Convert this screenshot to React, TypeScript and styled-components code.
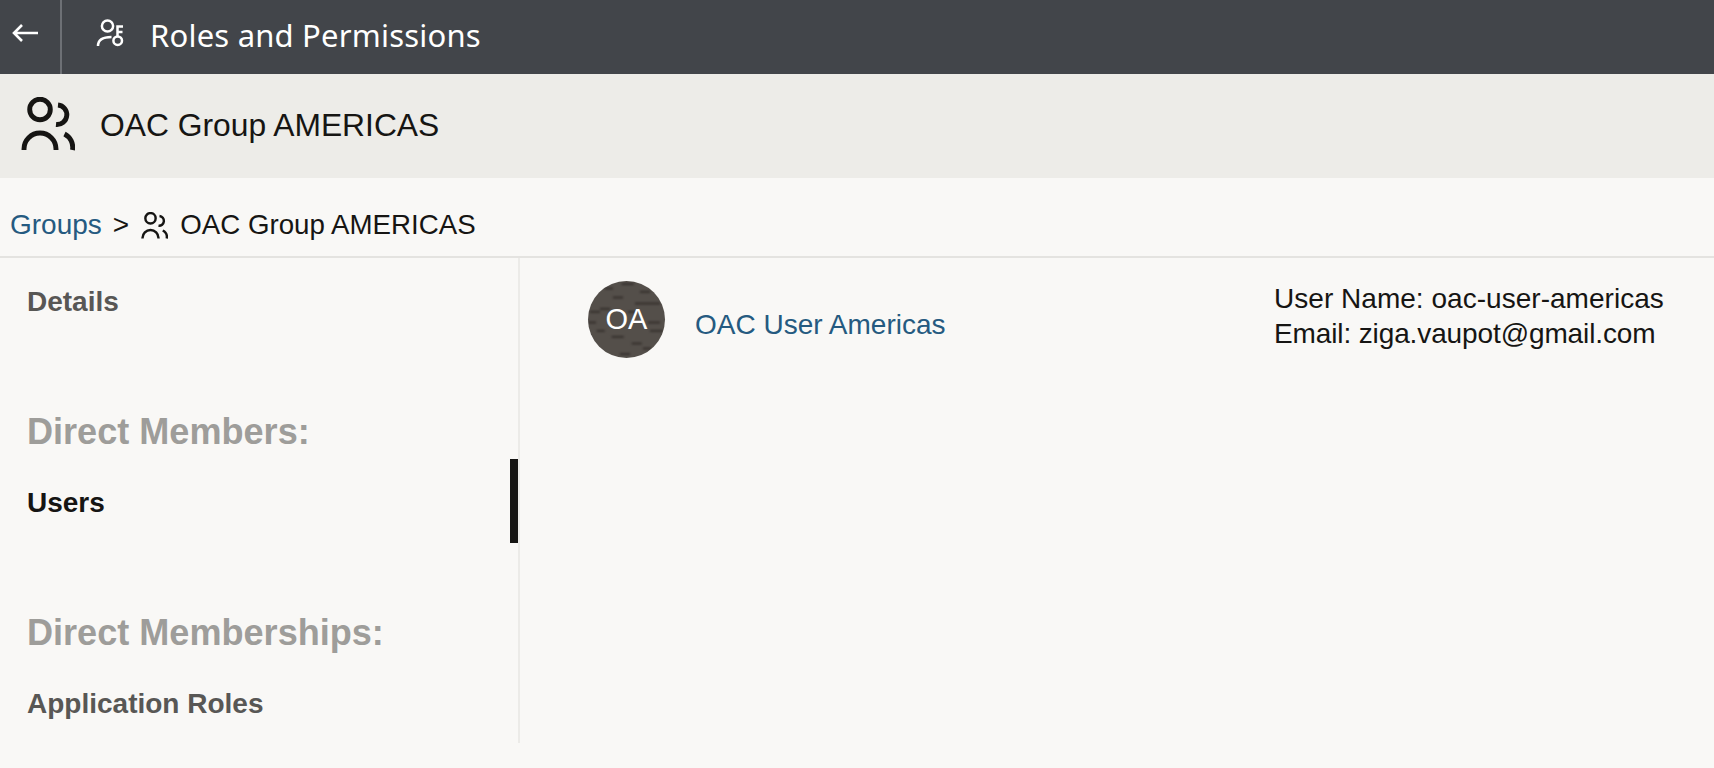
import React from "react";
import styled, { createGlobalStyle } from "styled-components";

const Global = createGlobalStyle`
  html, body { margin: 0; padding: 0; background: #f9f8f6; }
  body { font-family: "Liberation Sans", Arial, sans-serif; color: #161513; }
  * { box-sizing: border-box; }
`;

const Page = styled.div`
  width: 1714px;
  height: 768px;
  overflow: hidden;
  display: flex;
  flex-direction: column;
  background: #f9f8f6;
`;

const AppBar = styled.header`
  height: 74px;
  flex: none;
  display: flex;
  align-items: stretch;
  background: #42454a;
  color: #fff;
`;

const BackButton = styled.button`
  width: 62px;
  padding: 0 0 8px 12px;
  border: 0;
  border-right: 2px solid #6d7075;
  background: none;
  color: inherit;
  display: flex;
  align-items: center;
`;

const AppTitleGroup = styled.div`
  display: flex;
  align-items: center;
  padding: 0 0 3px 34px;
  gap: 26px;
`;

const AppTitle = styled.h1`
  margin: 0;
  font: 400 31px/1 "Noto Sans", sans-serif;
  letter-spacing: 0.2px;
`;

const GroupBar = styled.div`
  height: 104px;
  flex: none;
  display: flex;
  align-items: center;
  gap: 25px;
  padding-left: 21px;
  background: #edece8;
`;

const GroupIconSlot = styled.span`
  display: flex;
  margin-bottom: 4px;
`;

const GroupTitle = styled.h2`
  margin: 0;
  font: 400 31.8px/1 "Liberation Sans", Arial, sans-serif;
`;

const Breadcrumb = styled.nav`
  height: 80px;
  flex: none;
  display: flex;
  align-items: center;
  padding: 16px 0 0 10px;
  border-bottom: 2px solid #e4e3e0;
  font-size: 28px;
`;

const Crumb = styled.a`
  color: #255a80;
`;

const Separator = styled.span`
  margin: 0 12px 0 11px;
`;

const CrumbCurrent = styled.span`
  display: flex;
  align-items: center;
  gap: 12px;
  font-size: 27.7px;
`;

const Body = styled.div`
  display: flex;
  flex: 1;
  min-height: 0;
`;

const Sidebar = styled.aside`
  width: 520px;
  height: 485px;
  flex: none;
  padding-top: 26px;
  border-right: 2px solid #ecebe8;
  display: flex;
  flex-direction: column;
`;

const NavItem = styled.div<{ $active?: boolean }>`
  position: relative;
  height: 36px;
  padding-left: 27px;
  font: 700 28px/36px "Liberation Sans", Arial, sans-serif;
  color: ${(p) => (p.$active ? "#161513" : "#585755")};
`;

const ActiveMark = styled.span`
  position: absolute;
  right: 0;
  top: -26px;
  width: 8px;
  height: 84px;
  background: #161513;
`;

const NavHeading = styled.div`
  height: 44px;
  margin-top: 90px;
  margin-bottom: 31px;
  padding-left: 27px;
  font: 700 36.1px/44px "Liberation Sans", Arial, sans-serif;
  color: #9e9d9a;
`;

const Content = styled.main`
  flex: 1;
  padding: 23px 0 0 68px;
`;

const MemberRow = styled.div`
  display: flex;
  align-items: center;
`;

const Avatar = styled.div`
  position: relative;
  width: 77px;
  height: 77px;
  flex: none;
  border-radius: 50%;
  overflow: hidden;
  background: #544f4a;
  color: #fff;
  display: flex;
  align-items: center;
  justify-content: center;
  font-size: 29px;
`;

const AvatarTexture = styled.svg`
  position: absolute;
  inset: 0;
  filter: blur(0.8px);
`;

const AvatarInitials = styled.span`
  position: relative;
`;

const MemberName = styled.a`
  margin: 10px 0 0 30px;
  width: 579px;
  font-size: 28px;
  color: #255a80;
`;

const MemberInfo = styled.div`
  align-self: flex-start;
  font-size: 28px;
  line-height: 35px;
`;

const InfoLine = styled.div<{ $tight?: boolean }>`
  letter-spacing: ${(p) => (p.$tight ? "-0.12px" : "0.03px")};
`;

const UsersIcon = ({ size }: { size: number }) => (
  <svg width={size} height={size} viewBox="0 0 54 54" fill="none" stroke="currentColor" strokeWidth="4.9">
    <circle cx="19" cy="12.5" r="10.3" />
    <path d="M3 53V52A16 16 0 0 1 35 52V53" />
    <path d="M37 8A9.8 9.8 0 0 1 35 27.5" />
    <path d="M43.5 37A15 15 0 0 1 51.5 53" />
  </svg>
);

const KeyIconSvg = styled.svg`
  margin-bottom: 5px;
`;

const KeyUserIcon = () => (
  <KeyIconSvg width="28" height="28" viewBox="0 0 28 28" fill="none" stroke="currentColor" strokeWidth="2.5">
    <circle cx="11.5" cy="7" r="5.6" />
    <path d="M2 27C2 21 7 18 15.5 18" />
    <circle cx="21.7" cy="21.7" r="4.3" />
    <path d="M21.5 17.5V7.5H27M21.5 13H26.5" />
  </KeyIconSvg>
);

const ArrowIcon = () => (
  <svg width="26" height="18" viewBox="0 0 26 18" fill="none" stroke="currentColor" strokeWidth="2.6">
    <path d="M26 9H2M10 1L2 9L10 17" />
  </svg>
);

const marks = [
  [17, 6.7, 8], [33.7, 2.3, 12], [25, 15.7, 10], [47, 21.7, 25], [12, 27, 10], [2, 30, 10], [60, 40.7, 12],
  [0, 40.7, 8], [8.7, 49, 8], [62, 49, 13], [23.7, 55, 12], [43.7, 61.7, 10], [55, 66.7, 8], [32, 72.3, 10],
  [52, 10, 10], [40, 30, 8],
];

export default function App() {
  return (
    <Page>
      <Global />
      <AppBar>
        <BackButton aria-label="Back"><ArrowIcon /></BackButton>
        <AppTitleGroup>
          <KeyUserIcon />
          <AppTitle>Roles and Permissions</AppTitle>
        </AppTitleGroup>
      </AppBar>
      <GroupBar>
        <GroupIconSlot><UsersIcon size={54} /></GroupIconSlot>
        <GroupTitle>OAC Group AMERICAS</GroupTitle>
      </GroupBar>
      <Breadcrumb>
        <Crumb>Groups</Crumb>
        <Separator>&gt;</Separator>
        <CrumbCurrent><UsersIcon size={27} />OAC Group AMERICAS</CrumbCurrent>
      </Breadcrumb>
      <Body>
        <Sidebar>
          <NavItem>Details</NavItem>
          <NavHeading>Direct Members:</NavHeading>
          <NavItem $active>Users<ActiveMark /></NavItem>
          <NavHeading>Direct Memberships:</NavHeading>
          <NavItem>Application Roles</NavItem>
        </Sidebar>
        <Content>
          <MemberRow>
            <Avatar>
              <AvatarTexture viewBox="0 0 77 77" width="77" height="77">
                {marks.map(([x, y, w], i) => (
                  <rect key={i} x={x} y={y} width={w} height="1.6" fill="#2f2a27" />
                ))}
              </AvatarTexture>
              <AvatarInitials>OA</AvatarInitials>
            </Avatar>
            <MemberName>OAC User Americas</MemberName>
            <MemberInfo>
              <InfoLine>User Name: oac-user-americas</InfoLine>
              <InfoLine $tight>Email: ziga.vaupot@gmail.com</InfoLine>
            </MemberInfo>
          </MemberRow>
        </Content>
      </Body>
    </Page>
  );
}
